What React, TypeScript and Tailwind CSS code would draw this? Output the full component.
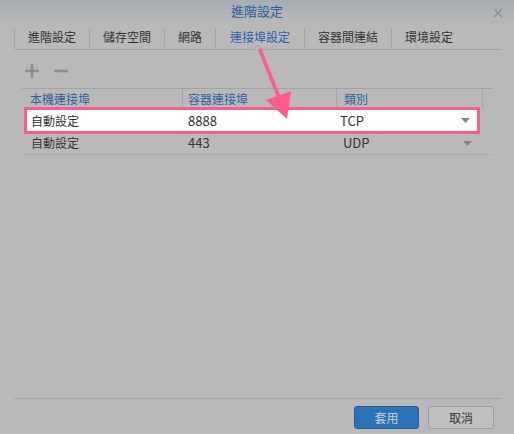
import React from "react"

const font = { fontFamily: '"Noto Sans CJK TC", "Noto Sans", sans-serif' }

const tabs = ["進階設定", "儲存空間", "網路", "連接埠設定", "容器間連結", "環境設定"]

function Caret() {
    return (
        <svg width="9" height="5" viewBox="0 0 9 5">
            <path d="M0 0h9L4.5 5z" fill="#80858d" />
        </svg>
    )
}

export default function App() {
    return (
        <div
            className="relative w-[514px] h-[434px] overflow-hidden bg-[#b9b9b9] flex flex-col text-[12px] text-[#363636]"
            style={font}
        >
            {/* title bar */}
            <div className="h-[25px] shrink-0 bg-gradient-to-b from-[#a6acb3] to-[#b9b9b9] flex items-center justify-center relative">
                <span className="text-[13px] text-[#2f5b9f] mt-[-3px]">進階設定</span>
                <svg className="absolute right-[11px] top-[8px]" width="10" height="10" viewBox="0 0 10 10">
                    <path d="M1 1l8 8M9 1l-8 8" stroke="#8d8f93" strokeWidth="1.4" />
                </svg>
            </div>

            {/* tabs */}
            <div className="relative ml-[14px] mr-[12px] h-[25px] shrink-0 flex items-center border-b border-[#a2a3a5]">
                {tabs.map((t, i) => (
                    <div
                        key={t}
                        className={
                            "px-[13px] h-[19px] flex items-center border-l border-[#a3a4a6] leading-none " +
                            (i === 3 ? "px-[14px] text-[#2d61ad]" : "text-[#333333]")
                        }
                    >
                        {t}
                    </div>
                ))}
                <svg className="absolute left-[239px] top-[19px]" width="10" height="6" viewBox="0 0 10 6">
                    <path d="M0 6L5 1L10 6" fill="#b9b9b9" stroke="#a2a3a5" strokeWidth="1" />
                </svg>
            </div>

            {/* toolbar */}
            <div className="h-[38px] shrink-0 flex items-center gap-[13px] pl-[24px] pt-[3px]">
                <svg width="16" height="16" viewBox="0 0 16 16">
                    <path d="M8 1v14M1 8h14" stroke="#8e8e8e" strokeWidth="2.6" />
                </svg>
                <svg width="16" height="16" viewBox="0 0 16 16">
                    <path d="M1 8h14" stroke="#8e8e8e" strokeWidth="2.6" />
                </svg>
            </div>

            {/* table */}
            <div className="ml-[22px] mr-[21px] border-t border-[#a0a4aa]">
                <div className="h-[20px] flex items-center text-[#345e9e]">
                    <div className="w-[160px] pl-[8px]">本機連接埠</div>
                    <div className="w-[154px] h-full flex items-center pl-[5px] border-l border-[#a3a6ab]">容器連接埠</div>
                    <div className="w-[146px] h-full flex items-center pl-[7px] border-l border-[#a3a6ab]">類別</div>
                    <div className="flex-1 h-full border-l border-[#a3a6ab]" />
                </div>
                <div className="h-[23px] relative">
                    <div className="absolute left-[2px] top-[-2px] w-[456px] h-[27px] border-[3px] border-[#fd5c8c] bg-white flex items-center text-[#333]">
                        <div className="w-[155px] pl-[4px]">自動設定</div>
                        <div className="w-[156px] pl-[6px] text-[13px]">8888</div>
                        <div className="flex-1 pl-[2px] text-[13px]">TCP</div>
                        <div className="pr-[7px] pb-[1px]">
                            <Caret />
                        </div>
                    </div>
                </div>
                <div className="h-[23px] flex items-center border-b border-[#a9abae]">
                    <div className="w-[160px] pl-[9px]">自動設定</div>
                    <div className="w-[157px] pl-[6px] text-[13px]">443</div>
                    <div className="w-[124px] pl-[4px] text-[13px]">UDP</div>
                    <Caret />
                </div>
            </div>

            <div className="flex-1" />

            {/* footer */}
            <div className="ml-[14px] mr-[12px] border-t border-[#a4a4a4] h-[36px] shrink-0 flex items-start justify-end gap-[9px] pt-[7px] pr-[8px]">
                <button className="w-[65px] h-[23px] rounded-[3px] bg-[#2b73b6] border border-[#275f93] text-[#c6cfd9] text-[12px] leading-none">
                    套用
                </button>
                <button className="w-[66px] h-[23px] rounded-[3px] bg-[#c0c0c0] border border-[#9e9e9e] text-[#363636] text-[12px] leading-none">
                    取消
                </button>
            </div>

            {/* annotation arrow */}
            <svg className="absolute left-0 top-0 pointer-events-none" width="514" height="434">
                <path d="M260 50L280 100" stroke="#fd5c8c" strokeWidth="3.5" strokeLinecap="round" />
                <path d="M266 100L291 91L287 119z" fill="#fd5c8c" />
            </svg>
        </div>
    )
}
